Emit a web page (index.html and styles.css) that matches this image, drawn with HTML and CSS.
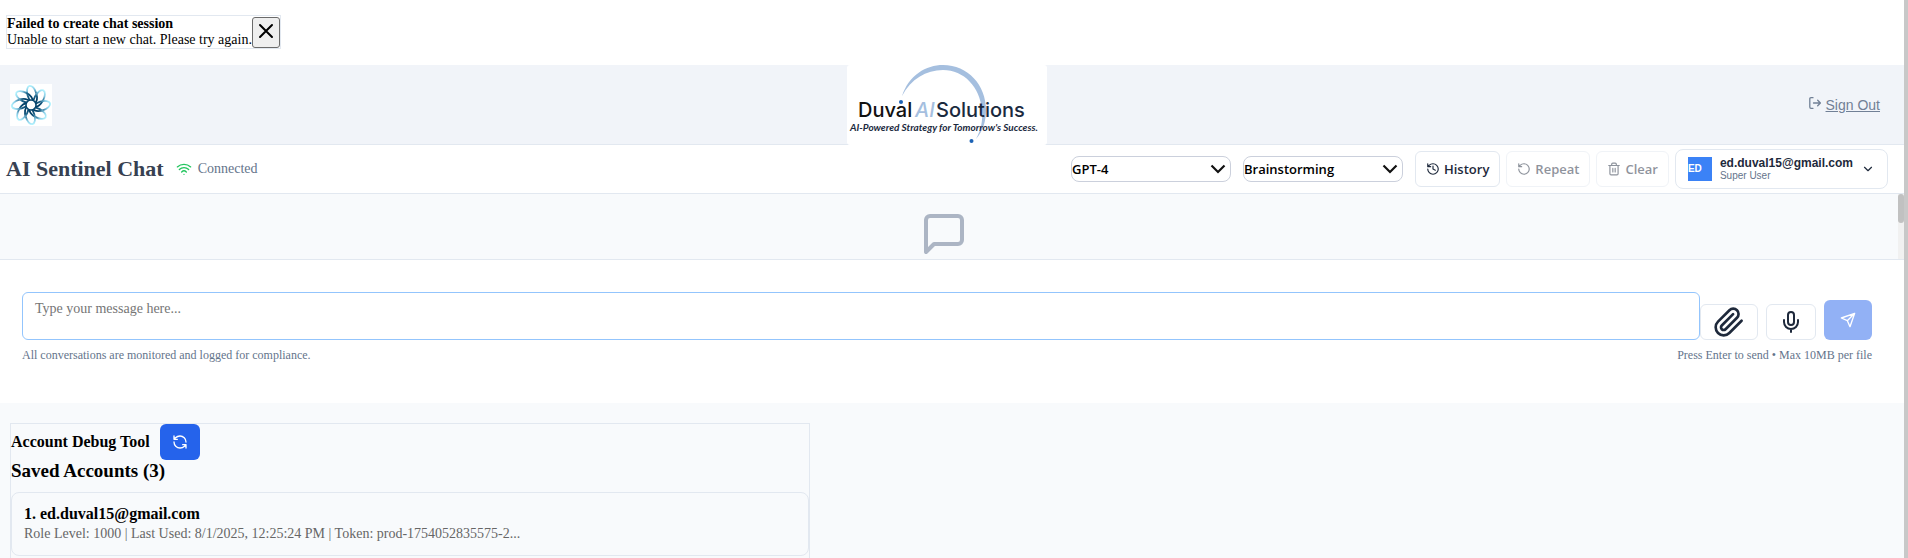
FILE: index.html
```html
<!DOCTYPE html>
<html lang="en">
<head>
<meta charset="utf-8">
<title>AI Sentinel Chat</title>
<link rel="stylesheet" href="styles.css">
</head>
<body>
<div class="page">
  <section class="notice-area">
    <div class="notice" role="alert">
      <div>
        <div class="notice-title">Failed to create chat session</div>
        <div>Unable to start a new chat. Please try again.</div>
      </div>
      <button class="notice-close" aria-label="Close">
        <svg width="16" height="16" viewBox="0 0 16 16" fill="none" stroke="currentColor" stroke-width="2" stroke-linecap="round"><path d="M2 2l12 12M14 2L2 14"/></svg>
      </button>
    </div>
  </section>

  <header class="brand-bar">
    <svg class="swirl" viewBox="0 0 42 42" aria-label="Sentinel">
      <defs>
        <radialGradient id="petal" gradientUnits="userSpaceOnUse" cx="21" cy="21" r="20">
          <stop offset="0.3" stop-color="#033f66"/>
          <stop offset="0.55" stop-color="#1d6288"/>
          <stop offset="0.8" stop-color="#8ed0e8"/>
          <stop offset="1" stop-color="#b5f4ff"/>
        </radialGradient>
        <path id="loop" d="M17 18C20 14 16 11 16.500 6C17 .5 22.500 0 24.500 4.500C27 10 24 14 25.500 18.500"/>
      </defs>
      <rect width="42" height="42" fill="#fff"/>
      <g fill="none" stroke="url(#petal)" stroke-width="1.800">
        <ellipse id="leaf" cx="22" cy="10.500" rx="4.500" ry="9" transform="rotate(-17 22 10.500)"/>
        <use href="#leaf" transform="rotate(45 21 21)"/>
        <use href="#leaf" transform="rotate(90 21 21)"/>
        <use href="#leaf" transform="rotate(135 21 21)"/>
        <use href="#leaf" transform="rotate(180 21 21)"/>
        <use href="#leaf" transform="rotate(225 21 21)"/>
        <use href="#leaf" transform="rotate(270 21 21)"/>
        <use href="#leaf" transform="rotate(315 21 21)"/>
      </g>
      <circle cx="21" cy="21" r="5" fill="#fff" stroke="#06466d" stroke-width="1.500"/>
    </svg>
    <svg class="company" viewBox="0 0 200 80">
      <rect width="200" height="80" rx="3" fill="#fff"/>
      <path d="M55 31C62 10 79 0 96 0C121 0 139 20 139 45C139 56 136 66 129 74C134 65 136 55 135 45C133 22 117 5 96 5C79 5 64 14 55 31Z" fill="#a5bfdf"/>
      <text x="11" y="52" class="word ink">Duval</text>
      <text x="68" y="52" class="word pale">AI</text>
      <text x="89" y="52" class="word navy">Solutions</text>
      <text x="3" y="66" class="tagline">AI-Powered Strategy for Tomorrow's Success.</text>
      <circle cx="54" cy="37" r="2" fill="#1c62b5"/>
      <circle cx="124.500" cy="76" r="2" fill="#1c62b5"/>
    </svg>
    <a class="sign-out" href="#">
      <svg width="12" height="12" viewBox="0 0 12 12" fill="none" stroke="currentColor" stroke-width="1.300" stroke-linecap="round" stroke-linejoin="round"><path d="M4 .7H2Q.8.700.8 2v8Q.8 11.300 2 11.300h2M4.500 6h6.800M8.700 3.300L11.400 6 8.700 8.700"/></svg>
      <span>Sign Out</span>
    </a>
  </header>

  <section class="toolbar">
    <h1>AI Sentinel Chat</h1>
    <div class="status">
      <svg width="16" height="16" viewBox="0 0 24 24" fill="none" stroke="#22c55e" stroke-width="2" stroke-linecap="round" stroke-linejoin="round"><path d="M12 20h.01M2 8.820a15 15 0 0 1 20 0M5 12.859a10 10 0 0 1 14 0M8.500 16.429a5 5 0 0 1 7 0"/></svg>
      <span>Connected</span>
    </div>
    <div class="pickers">
      <div class="picker">
        <select aria-label="Model"><option>GPT-4</option></select>
        <svg viewBox="0 0 16 10" fill="none" stroke="#111" stroke-width="2.200"><path d="M1.500 1.500L8 8l6.500-6.500"/></svg>
      </div>
      <div class="picker">
        <select aria-label="Mode"><option>Brainstorming</option></select>
        <svg viewBox="0 0 16 10" fill="none" stroke="#111" stroke-width="2.200"><path d="M1.500 1.500L8 8l6.500-6.500"/></svg>
      </div>
    </div>
    <div class="actions">
      <button class="action">
        <svg viewBox="0 0 24 24"><path d="M3 12a9 9 0 1 0 9-9 9.750 9.750 0 0 0-6.740 2.740L3 8M3 3v5h5M12 7v5l4 2"/></svg>
        <span>History</span>
      </button>
      <button class="action" disabled>
        <svg viewBox="0 0 24 24"><path d="M3 12a9 9 0 1 0 9-9 9.750 9.750 0 0 0-6.740 2.740L3 8M3 3v5h5"/></svg>
        <span>Repeat</span>
      </button>
      <button class="action" disabled>
        <svg viewBox="0 0 24 24"><path d="M3 6h18M19 6v14a2 2 0 0 1-2 2H7a2 2 0 0 1-2-2V6M8 6V4a2 2 0 0 1 2-2h4a2 2 0 0 1 2 2v2M10 11v6M14 11v6"/></svg>
        <span>Clear</span>
      </button>
      <button class="account">
        <span class="avatar">ED</span>
        <span class="who"><span class="email">ed.duval15@gmail.com</span><span class="role">Super User</span></span>
        <svg width="14" height="14" viewBox="0 0 24 24" fill="none" stroke="currentColor" stroke-width="2" stroke-linecap="round" stroke-linejoin="round"><path d="M6 9l6 6 6-6"/></svg>
      </button>
    </div>
  </section>

  <section class="messages">
    <div class="empty">
      <svg width="48" height="48" viewBox="0 0 24 24" fill="none" stroke="#acb5c4" stroke-width="2" stroke-linecap="round" stroke-linejoin="round"><path d="M21 15a2 2 0 0 1-2 2H7l-4 4V5a2 2 0 0 1 2-2h14a2 2 0 0 1 2 2z"/></svg>
    </div>
    <div class="track"><div class="thumb"></div></div>
  </section>

  <form class="composer">
    <div class="compose-row">
      <textarea aria-label="Message" placeholder="Type your message here..."></textarea>
      <div class="compose-buttons">
        <button type="button" class="tool attach" aria-label="Attach file">
          <svg width="32" height="32" viewBox="0 0 24 24"><path d="M21.440 11.050l-9.190 9.190a6 6 0 0 1-8.490-8.490l8.570-8.570A4 4 0 1 1 18 8.840l-8.590 8.570a2 2 0 0 1-2.830-2.830l8.490-8.480"/></svg>
        </button>
        <button type="button" class="tool mic" aria-label="Record">
          <svg width="24" height="24" viewBox="0 0 24 24"><path d="M12 2a3 3 0 0 0-3 3v7a3 3 0 0 0 6 0V5a3 3 0 0 0-3-3zM19 10v2a7 7 0 0 1-14 0v-2M12 19v3"/></svg>
        </button>
        <button type="button" class="send" aria-label="Send">
          <svg width="16" height="16" viewBox="0 0 24 24"><path d="M22 2L15 22 11 13 2 9 22 2zM22 2L11 13"/></svg>
        </button>
      </div>
    </div>
    <div class="hints">
      <span>All conversations are monitored and logged for compliance.</span>
      <span>Press Enter to send • Max 10MB per file</span>
    </div>
  </form>

  <section class="debug-area">
    <div class="debug">
      <div class="debug-head">
        <h2>Account Debug Tool</h2>
        <button class="refresh" aria-label="Refresh">
          <svg width="16" height="16" viewBox="0 0 24 24"><path d="M21 12a9 9 0 0 0-9-9 9.750 9.750 0 0 0-6.740 2.740L3 8M3 3v5h5M3 12a9 9 0 0 0 9 9 9.750 9.750 0 0 0 6.740-2.740L21 16M16 16h5v5"/></svg>
        </button>
      </div>
      <h3>Saved Accounts (3)</h3>
      <article class="saved">
        <h4>1. ed.duval15@gmail.com</h4>
        <p>Role Level: 1000 | Last Used: 8/1/2025, 12:25:24 PM | Token: prod-1754052835575-2...</p>
      </article>
    </div>
  </section>
</div>
<div class="page-scroll"></div>
</body>
</html>
```

FILE: styles.css
```css
* { box-sizing: border-box; }
body {
  margin: 0;
  display: flex;
  height: 100vh;
  overflow: hidden;
  background: #fff;
  color: #000;
  font-family: "Liberation Serif", "Times New Roman", serif;
  font-size: 14px;
}
h1, h2, h3, h4, p { margin: 0; }
button, select, textarea { margin: 0; font: inherit; color: inherit; }
svg { display: block; flex: none; }
.page { flex: 1; min-width: 0; display: flex; flex-direction: column; overflow: hidden; }
.page > * { flex-shrink: 0; }
.page-scroll { width: 4px; background: #c8c8c8; }

.notice-area { padding: 15px 6px 16px; }
.notice {
  display: inline-flex;
  align-items: center;
  vertical-align: top;
  border: 1px solid #e2e8f0;
  line-height: 16px;
}
.notice-title { font-weight: bold; }
.notice-close {
  display: flex;
  padding: 5px 5px 8px;
  border: 1px solid #6b6b6b;
  border-radius: 3px;
  background: #efefef;
}

.brand-bar {
  display: grid;
  grid-template-columns: 1fr 200px 1fr;
  align-items: center;
  padding: 0 14px 0 4px;
  background: #f1f4f9;
  box-shadow: inset 0 -1px #e2e8f0;
}
.swirl { width: 42px; height: 42px; margin-left: 6px; }
.company { width: 200px; height: 80px; }
.word { font: 500 20px Inter, sans-serif; }
.ink { fill: #111; }
.pale { fill: #a5bfdf; font-style: italic; }
.navy { fill: #1b2a3e; }
.tagline { font: italic 700 10px Lato, sans-serif; fill: #1b2a3e; }
.sign-out {
  justify-self: end;
  display: flex;
  gap: 5px;
  margin-right: 10px;
  color: #718096;
  font: 14px/16px "Liberation Sans", Arial, sans-serif;
}

.toolbar {
  display: flex;
  align-items: center;
  height: 49px;
  padding: 0 16px 0 6px;
  border-bottom: 1px solid #e2e8f0;
}
h1 { font-size: 22px; color: #374151; }
.status { display: flex; align-items: center; gap: 6px; margin-left: 12px; color: #64748b; }
.pickers { display: flex; gap: 12px; margin-left: auto; margin-right: 12px; }
.picker { position: relative; }
.picker select {
  display: block;
  appearance: none;
  width: 160px;
  height: 26px;
  padding: 0;
  border: 1px solid #cbd0dc;
  border-radius: 8px;
  background: #fff;
  color: #000;
  font: 600 13px "Open Sans", sans-serif;
}
.picker svg { position: absolute; right: 5px; top: 8px; width: 16px; height: 10px; pointer-events: none; }
.actions { display: flex; align-items: center; gap: 6px; }
.action {
  display: flex;
  align-items: center;
  gap: 4px;
  height: 36px;
  padding: 0 10px;
  border: 1px solid #e2e8f0;
  border-radius: 6px;
  background: #fff;
  color: #1e293b;
  font: 600 13px "Open Sans", sans-serif;
}
.action svg { width: 14px; height: 14px; fill: none; stroke: currentColor; stroke-width: 2; stroke-linecap: round; stroke-linejoin: round; }
.action:disabled { opacity: 0.5; }
.account {
  display: flex;
  align-items: center;
  gap: 8px;
  height: 40px;
  padding: 0 12px;
  border: 1px solid #e2e8f0;
  border-radius: 8px;
  background: #fff;
  color: #1e293b;
  font-family: "Liberation Sans", Arial, sans-serif;
  text-align: left;
}
.avatar { width: 24px; height: 24px; background: #3b82f6; color: #fff; font-size: 10px; line-height: 24px; font-weight: bold; }
.who { display: flex; flex-direction: column; }
.email { font-size: 12px; line-height: 14px; font-weight: bold; }
.role { font-size: 10px; line-height: 12px; color: #64748b; }

.messages { display: flex; height: 66px; background: #f8fafc; border-bottom: 1px solid #e2e8f0; }
.empty { flex: 1; display: flex; justify-content: center; padding: 16px 10px 0 0; }
.track { width: 6px; background: #f1f1f1; }
.thumb { height: 29px; border-radius: 3px; background: #c1c1c1; }

.composer { padding: 32px 32px 40px 22px; }
.compose-row { display: flex; align-items: flex-end; }
textarea {
  flex: 1;
  height: 48px;
  padding: 8px 12px;
  border: 1px solid #93c5fd;
  border-radius: 6px;
  background: #fff;
  resize: none;
  line-height: 16px;
}
textarea::placeholder { color: #757575; }
.compose-buttons { display: flex; align-items: flex-end; gap: 8px; }
.tool, .send { display: flex; align-items: center; justify-content: center; padding: 0; border-radius: 6px; }
.tool { height: 36px; border: 1px solid #e2e8f0; background: #fff; color: #1e293b; }
.attach { width: 58px; }
.mic { width: 50px; }
.send { width: 48px; height: 40px; border: 0; background: #92b1f5; color: #fff; }
.tool svg, .send svg, .refresh svg { fill: none; stroke: currentColor; stroke-width: 2; stroke-linecap: round; stroke-linejoin: round; }
.hints { display: flex; justify-content: space-between; margin-top: 8px; color: #64748b; font-size: 12px; line-height: 15px; }

.page > .debug-area { flex: 1 0 auto; padding: 20px 10px 0; background: #f8fafc; }
.debug-area { display: flex; }
.debug { width: 100%; max-width: 800px; border: 1px solid #e2e8f0; border-bottom: 0; }
.debug-head { display: flex; align-items: center; gap: 10px; }
h2 { font-size: 16px; }
.refresh { display: flex; padding: 10px 12px; border: 0; border-radius: 6px; background: #2563eb; color: #fff; }
h3 { font-size: 19px; line-height: 22px; }
.saved { margin-top: 10px; padding: 11px 12px; border: 1px solid #e2e8f0; border-radius: 8px; }
h4 { font-size: 16px; line-height: 20px; }
.saved p { color: #666; line-height: 20px; }
```
